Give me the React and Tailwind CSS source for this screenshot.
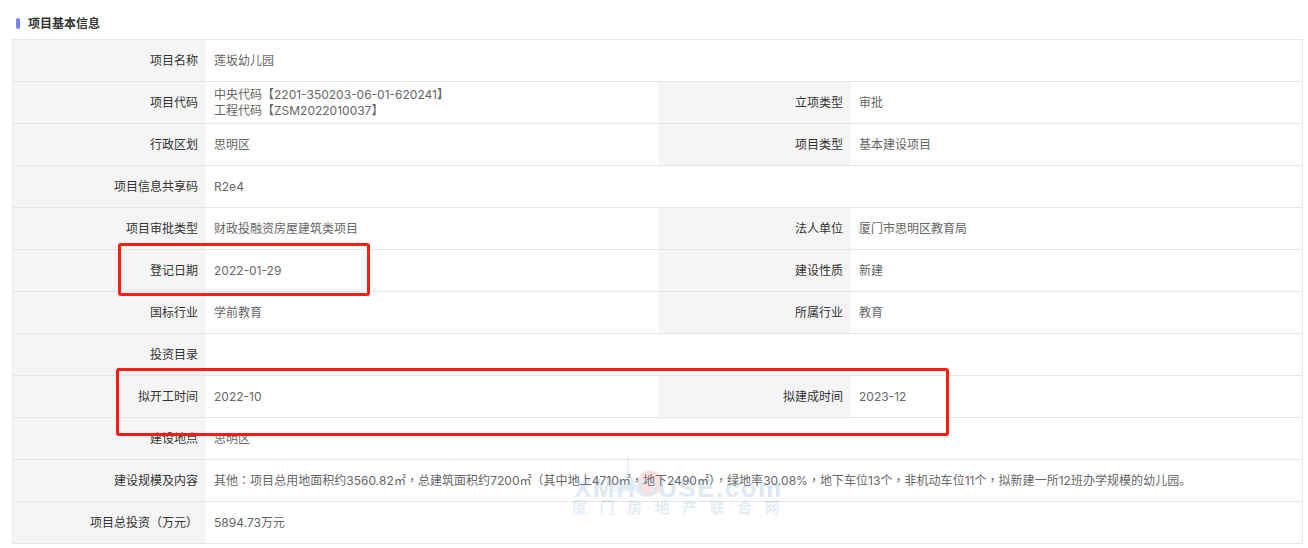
const rows = [
  [["项目名称", "莲坂幼儿园"]],
  [["项目代码", "中央代码【2201-350203-06-01-620241】\n工程代码【ZSM2022010037】"], ["立项类型", "审批"]],
  [["行政区划", "思明区"], ["项目类型", "基本建设项目"]],
  [["项目信息共享码", "R2e4"]],
  [["项目审批类型", "财政投融资房屋建筑类项目"], ["法人单位", "厦门市思明区教育局"]],
  [["登记日期", "2022-01-29"], ["建设性质", "新建"]],
  [["国标行业", "学前教育"], ["所属行业", "教育"]],
  [["投资目录", ""]],
  [["拟开工时间", "2022-10"], ["拟建成时间", "2023-12"]],
  [["建设地点", "思明区"]],
  [["建设规模及内容", "其他：项目总用地面积约3560.82㎡，总建筑面积约7200㎡（其中地上4710㎡，地下2490㎡），绿地率30.08%，地下车位13个，非机动车位11个，拟新建一所12班办学规模的幼儿园。"]],
  [["项目总投资（万元）", "5894.73万元"]],
];

function Punct({ text }) {
  return text.split(/([：，（）])/).map((part, i) => {
    if (/^[：，]$/.test(part)) return <span key={i} className="font-['Noto_Sans_CJK_TC']">{part}</span>;
    if (/^[（）]$/.test(part)) return <span key={i} className="font-['Noto_Sans_CJK_KR']">{part}</span>;
    return part;
  });
}

function Label({ children }) {
  return (
    <div className="flex items-center justify-end bg-[#f5f5f5] pr-2 text-[#333]">
      <span><Punct text={children} /></span>
    </div>
  );
}
function Value({ children, wide }) {
  return (
    <div className={`flex items-center whitespace-pre-line pl-2 leading-4 text-[#666] ${wide ? "col-span-3 tracking-[0.03px]" : ""}`}>
      <span><Punct text={children} /></span>
    </div>
  );
}

export default function App() {
  return (
    <div
      className="relative h-[548px] w-[1308px] overflow-hidden bg-white text-xs"
      style={{ fontFamily: 'Inter, "Noto Sans CJK SC", sans-serif' }}
    >
      <div className="flex h-[39px] items-center pl-4 pt-2">
        <span className="h-[11px] w-1 rounded-sm bg-gradient-to-r from-[#8a7ff2] to-[#5b8cf5]" />
        <span className="ml-2 font-bold text-[#333]">项目基本信息</span>
      </div>
      <div className="ml-3 w-[1291px] border border-b-0 border-[#e8e8e8]">
        {rows.map((r, i) => (
          <div key={i} className="grid h-[42px] grid-cols-[193px_452px_193px_1fr] border-b border-[#e5e5e5]">
            <Label>{r[0][0]}</Label>
            <Value wide={r.length === 1}>{r[0][1]}</Value>
            {r[1] && <Label>{r[1][0]}</Label>}
            {r[1] && <Value>{r[1][1]}</Value>}
          </div>
        ))}
      </div>

      <div className="pointer-events-none absolute left-[118px] top-[243px] h-[53px] w-[252px] rounded-[3px] border-[3px] border-[#fb1c12]" />
      <div className="pointer-events-none absolute left-[116px] top-[368px] h-[68px] w-[833px] rounded-[3px] border-[3px] border-[#fb1c12]" />

      <div className="pointer-events-none absolute left-[572px] top-[450px] h-[70px] w-[210px] opacity-20">
        <svg className="absolute left-[36px] top-0" width="40" height="42" viewBox="0 0 40 42">
          <path d="M20 0 L22 22 L26 32 L36 42 L4 42 L14 32 L18 22 Z" fill="#a9c4de" />
        </svg>
        <svg className="absolute left-[65px] top-[20px]" width="26" height="26" viewBox="0 0 26 26">
          <circle cx="13" cy="13" r="12.5" fill="#ee6b50" />
        </svg>
        <div className="absolute left-[2px] top-[25px] whitespace-nowrap font-['Liberation_Sans',sans-serif] text-[26px] font-bold leading-none tracking-[1.5px] text-[#5f93c8]">
          XMHOUSE.com
        </div>
        <div className="absolute left-0 top-[50px] whitespace-nowrap text-[15px] font-bold leading-none tracking-[12.5px] text-[#7ea8d0]">
          厦门房地产联合网
        </div>
      </div>
    </div>
  );
}
